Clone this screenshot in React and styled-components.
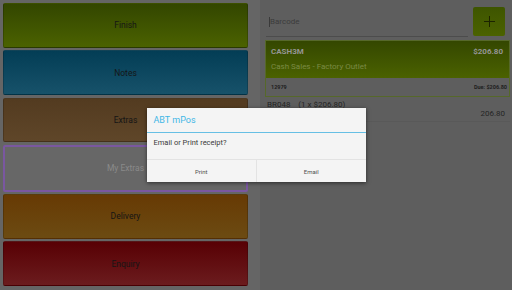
import styled, { createGlobalStyle } from "styled-components";

const GlobalStyle = createGlobalStyle`
  html, body {
    margin: 0;
    padding: 0;
    width: 512px;
    height: 290px;
    overflow: hidden;
    background: #5e5e5e;
    font-family: Roboto, "Noto Sans", sans-serif;
    font-weight: 400;
  }
`;

const actions = [
  { label: "Finish", top: "#334600", bottom: "#4b6200" },
  { label: "Notes", top: "#033d55", bottom: "#17526a" },
  { label: "Extras", top: "#533b20", bottom: "#5f4629" },
  { label: "My Extras", outline: true },
  { label: "Delivery", top: "#673a04", bottom: "#6c4b12" },
  { label: "Enquiry", top: "#580004", bottom: "#6b1c1e" },
];

export default function App() {
  return (
    <>
      <GlobalStyle />
      <Screen>
        <LeftPanel>
          {actions.map((a) => (
            <ActionButton
              key={a.label}
              $top={a.top}
              $bottom={a.bottom}
              $outline={a.outline}
            >
              {a.label}
            </ActionButton>
          ))}
        </LeftPanel>

        <RightPanel>
          <SearchRow>
            <BarcodeField>
              <Caret />
              Barcode
            </BarcodeField>
            <AddButton>
              <svg width="11" height="11" viewBox="0 0 11 11">
                <path d="M5.5 0v11M0 5.5h11" stroke="#1c2400" strokeWidth="1" />
              </svg>
            </AddButton>
          </SearchRow>

          <Card>
            <CardHeader>
              <HeaderLine>
                <Account>CASH3M</Account>
                <Account>$206.80</Account>
              </HeaderLine>
              <CustomerName>Cash Sales - Factory Outlet</CustomerName>
            </CardHeader>
            <CardMeta>
              <strong>12979</strong>
              <strong>Due: $206.80</strong>
            </CardMeta>
          </Card>

          <LineItem>
            <ItemTitle>BR048&nbsp;&nbsp;&nbsp;&nbsp;(1 x $206.80)</ItemTitle>
            <ItemTotal>206.80</ItemTotal>
          </LineItem>
        </RightPanel>

        <Scrim>
          <Dialog>
            <DialogTitle>ABT mPos</DialogTitle>
            <DialogBody>Email or Print receipt?</DialogBody>
            <DialogActions>
              <DialogButton>Print</DialogButton>
              <DialogButton>Email</DialogButton>
            </DialogActions>
          </Dialog>
        </Scrim>
      </Screen>
    </>
  );
}

const Screen = styled.div`
  position: relative;
  display: grid;
  grid-template-columns: 260px 1fr;
  width: 512px;
  height: 290px;
`;

const LeftPanel = styled.div`
  display: flex;
  flex-direction: column;
  gap: 2.5px;
  padding: 3px 12px 4px 3px;
  background: #656565;
`;

const ActionButton = styled.div`
  flex: 1;
  display: flex;
  align-items: center;
  justify-content: center;
  border-radius: 2px;
  font-size: 8.5px;
  color: ${(p) => (p.$outline ? "#8a8a8a" : "#151515")};
  background: ${(p) =>
    p.$outline
      ? "#676767"
      : `linear-gradient(to bottom, ${p.$top}, ${p.$bottom})`};
  border: ${(p) =>
    p.$outline ? "2px solid #7a57a0" : "1px solid rgba(0,0,0,0.18)"};
`;

const RightPanel = styled.div`
  display: flex;
  flex-direction: column;
  padding: 7px 2px 0 5px;
  background: #5e5e5e;
`;

const SearchRow = styled.div`
  display: flex;
  gap: 5px;
  padding: 0 5px 0 1px;
`;

const BarcodeField = styled.div`
  display: flex;
  align-items: center;
  width: 202px;
  height: 30px;
  padding-left: 3px;
  box-sizing: border-box;
  border-bottom: 1px solid #4c4c4c;
  font-size: 8px;
  color: #3c3c3c;
`;

const Caret = styled.span`
  width: 1px;
  height: 10px;
  background: #3a3a3a;
`;

const AddButton = styled.div`
  display: flex;
  align-items: center;
  justify-content: center;
  width: 32px;
  height: 29px;
  border-radius: 2px;
  background: linear-gradient(to bottom, #3e5500, #4b6200);
`;

const Card = styled.div`
  margin-top: 3px;
  border: 1px solid #56682a;
`;

const CardHeader = styled.div`
  height: 37px;
  padding: 6px 6px 0 5px;
  box-sizing: border-box;
  background: linear-gradient(to bottom, #344700, #4b6200);
`;

const HeaderLine = styled.div`
  display: flex;
  justify-content: space-between;
`;

const Account = styled.span`
  font-size: 8px;
  font-weight: bold;
  color: #959595;
`;

const CustomerName = styled.div`
  margin-top: 6px;
  font-size: 8px;
  color: #7a8a44;
`;

const CardMeta = styled.div`
  display: flex;
  justify-content: space-between;
  align-items: center;
  height: 18px;
  padding: 0 2px 0 5px;
  font-size: 5.5px;
  color: #1e1e1e;
`;

const LineItem = styled.div`
  display: flex;
  flex-direction: column;
  padding: 3px 5px 3px 2px;
  border-bottom: 1px solid #595959;
`;

const ItemTitle = styled.span`
  font-size: 8px;
  color: #252525;
  line-height: 9px;
`;

const ItemTotal = styled.span`
  align-self: flex-end;
  font-size: 8px;
  color: #252525;
  line-height: 9px;
`;

const Scrim = styled.div`
  position: absolute;
  inset: 0;
  display: flex;
  align-items: center;
  justify-content: center;
`;

const Dialog = styled.div`
  width: 219px;
  background: #f4f4f4;
  box-shadow: 0 1px 4px rgba(0, 0, 0, 0.55);
`;

const DialogTitle = styled.div`
  height: 24px;
  display: flex;
  align-items: center;
  padding-left: 7px;
  font-size: 9px;
  color: #3fb7e6;
  border-bottom: 1px solid #66bfe4;
`;

const DialogBody = styled.div`
  height: 26px;
  padding: 5px 7px 0;
  box-sizing: border-box;
  font-size: 7.5px;
  color: #3a3a3a;
`;

const DialogActions = styled.div`
  display: grid;
  grid-template-columns: 1fr 1fr;
  border-top: 1px solid #e3e3e3;
`;

const DialogButton = styled.div`
  height: 22px;
  display: flex;
  align-items: center;
  justify-content: center;
  font-size: 6px;
  color: #505050;
  & + & {
    border-left: 1px solid #e3e3e3;
  }
`;
